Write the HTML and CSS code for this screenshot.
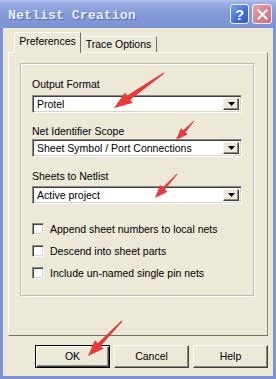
FILE: index.html
```html
<!DOCTYPE html>
<html>
<head>
<meta charset="utf-8">
<link rel="stylesheet" href="styles.css">
</head>
<body>
<div class="window">
  <div class="titlebar">
    <span class="title">Netlist Creation</span>
    <div class="tb-buttons">
      <span class="tb-btn help">?</span>
      <span class="tb-btn close"><svg width="11" height="11" viewBox="0 0 11 11"><path d="M1.5 1.5 L9.5 9.5 M9.5 1.5 L1.5 9.5" stroke="#fff" stroke-width="2" stroke-linecap="square"/></svg></span>
    </div>
  </div>
  <div class="client">
    <div class="tabs">
      <div class="tab active">Preferences</div>
      <div class="tab">Trace Options</div>
    </div>
    <div class="panel">
      <div class="group">
        <div class="label l1">Output Format</div>
        <div class="combo c1"><span class="value">Protel</span><span class="drop"><svg width="7" height="4" viewBox="0 0 7 4"><path d="M0 0 H7 L3.5 4 Z" fill="#000"/></svg></span></div>
        <div class="label l2">Net Identifier Scope</div>
        <div class="combo c2"><span class="value">Sheet Symbol / Port Connections</span><span class="drop"><svg width="7" height="4" viewBox="0 0 7 4"><path d="M0 0 H7 L3.5 4 Z" fill="#000"/></svg></span></div>
        <div class="label l3">Sheets to Netlist</div>
        <div class="combo c3"><span class="value">Active project</span><span class="drop"><svg width="7" height="4" viewBox="0 0 7 4"><path d="M0 0 H7 L3.5 4 Z" fill="#000"/></svg></span></div>
        <div class="checks">
          <div class="check"><span class="box"></span><span>Append sheet numbers to local nets</span></div>
          <div class="check"><span class="box"></span><span>Descend into sheet parts</span></div>
          <div class="check"><span class="box"></span><span>Include un-named single pin nets</span></div>
        </div>
      </div>
    </div>
    <div class="buttons">
      <div class="btn default">OK</div>
      <div class="btn">Cancel</div>
      <div class="btn">Help</div>
    </div>
  </div>
  <svg class="arrows" width="276" height="379" viewBox="0 0 276 379">
    <g fill="#e8383d">
      <polygon points="163.66,72.51 127.2,95.6 125.0,92.4 114,108 132.5,103.0 130.3,99.8 164.34,73.49"/>
      <polygon points="193.64,120.66 183.17,130.26 180.99,128.19 176,140 187.53,134.39 185.35,132.32 194.36,121.34"/>
      <polygon points="176.63,173.66 162.68,187.41 160.1,185.04 155,198 167.48,191.8 164.9,189.43 177.37,174.34"/>
      <polygon points="121.57,320.58 97.72,343.14 94.85,340.35 88,356 103.45,348.71 100.58,345.92 122.43,321.42"/>
    </g>
  </svg>
</div>
</body>
</html>
```
FILE: styles.css
```css
html, body {
  margin: 0;
  padding: 0;
}
body {
  width: 276px;
  height: 379px;
  overflow: hidden;
  font-family: "Liberation Sans", Arial, sans-serif;
  font-size: 10.5px;
  color: #000;
}
.window {
  position: relative;
  width: 276px;
  height: 379px;
  background: #7e93d4;
  display: flex;
  flex-direction: column;
}
.titlebar {
  height: 28px;
  flex: none;
  display: flex;
  align-items: flex-start;
  padding: 0 4px 0 8px;
  background: linear-gradient(#b6c4ec 0, #9aaee4 3px, #8399d8 50%, #7d93d4 100%);
}
.title {
  font-family: "Liberation Mono", "Courier New", monospace;
  font-weight: bold;
  font-size: 13.3px;
  line-height: 15px;
  margin-top: 8px;
  color: #e8eeff;
  text-shadow: 1px 1px 0 #566fbb;
}
.tb-buttons {
  margin-left: auto;
  margin-top: 4px;
  display: flex;
  gap: 3px;
}
.tb-btn {
  width: 19px;
  height: 20px;
  box-sizing: border-box;
  border: 1px solid #eef2ff;
  border-radius: 3px;
  display: flex;
  align-items: center;
  justify-content: center;
}
.help {
  background: linear-gradient(135deg, #7aa1f2, #3f6bd6 60%, #3560cc);
  color: #fff;
  font-weight: bold;
  font-size: 15px;
  font-family: "Liberation Sans", Arial, sans-serif;
}
.close {
  width: 20px;
  background: linear-gradient(135deg, #e7a3ae, #d4808d 60%, #c96f7e);
}
.client {
  flex: 1;
  margin: 0 3px 3px;
  background: #ece9d8;
  padding: 5px 5px 0;
  display: flex;
  flex-direction: column;
}
.tabs {
  display: flex;
  align-items: flex-end;
  height: 19px;
  padding-left: 6px;
}
.tab {
  box-sizing: border-box;
  height: 16px;
  width: 76px;
  border-top: 1px solid #fff;
  border-right: 1px solid #716f64;
  text-align: center;
  line-height: 15px;
  background: #ece9d8;
}
.tab.active {
  position: relative;
  z-index: 1;
  width: 67px;
  height: 21px;
  margin-bottom: -1px;
  border-left: 1px solid #fff;
  line-height: 17px;
}
.panel {
  box-sizing: border-box;
  height: 284px;
  border: 1px solid;
  border-color: #fff #8a8878 #716f64 #fff;
  padding: 10px 13px 0 11px;
}
.group {
  box-sizing: border-box;
  height: 233px;
  border: 1px solid #bdbbac;
  box-shadow: inset 1px 1px 0 #fff, 1px 1px 0 #fff;
  padding: 0 11px;
}
.label {
  line-height: 12px;
  height: 12px;
  white-space: nowrap;
}
.l1 { margin-top: 14px; }
.l2 { margin-top: 12px; }
.l3 { margin-top: 13px; }
.combo {
  box-sizing: border-box;
  height: 18px;
  background: #fff;
  border: 1px solid;
  border-color: #8d8b7e #fff #fff #8d8b7e;
  box-shadow: inset 1px 1px 0 #404040, inset -1px -1px 0 #d8d5c5;
  display: flex;
  align-items: center;
  padding: 2px;
}
.c1 { margin-top: 5px; }
.c2 { margin-top: 2px; }
.c3 { margin-top: 4px; }
.value {
  padding-left: 2px;
  white-space: nowrap;
  line-height: 12px;
}
.drop {
  margin-left: auto;
  align-self: stretch;
  width: 16px;
  box-sizing: border-box;
  background: #ece9d8;
  border: 1px solid;
  border-color: #f4f2ea #404040 #404040 #f4f2ea;
  box-shadow: inset -1px -1px 0 #8d8b7e;
  display: flex;
  align-items: center;
  justify-content: center;
}
.checks {
  margin-top: 19px;
  display: flex;
  flex-direction: column;
  gap: 10px;
}
.check {
  display: flex;
  align-items: center;
  gap: 6px;
  height: 12px;
  line-height: 12px;
  white-space: nowrap;
}
.box {
  width: 12px;
  height: 12px;
  box-sizing: border-box;
  background: #fff;
  border: 1px solid;
  border-color: #8d8b7e #fff #fff #8d8b7e;
  box-shadow: inset 1px 1px 0 #404040, inset -1px -1px 0 #d8d5c5;
  flex: none;
}
.buttons {
  margin-top: 9px;
  display: flex;
  justify-content: flex-end;
  gap: 4px;
}
.btn {
  box-sizing: border-box;
  width: 75px;
  height: 23px;
  background: #ece9d8;
  border: 1px solid;
  border-color: #fff #404040 #404040 #fff;
  box-shadow: inset -1px -1px 0 #8d8b7e;
  text-align: center;
  line-height: 21px;
}
.btn.default {
  border-color: #000;
  box-shadow: inset 1px 1px 0 #fff, inset -1px -1px 0 #404040, inset -2px -2px 0 #8d8b7e;
}
.arrows {
  position: absolute;
  left: 0;
  top: 0;
  pointer-events: none;
}
```
